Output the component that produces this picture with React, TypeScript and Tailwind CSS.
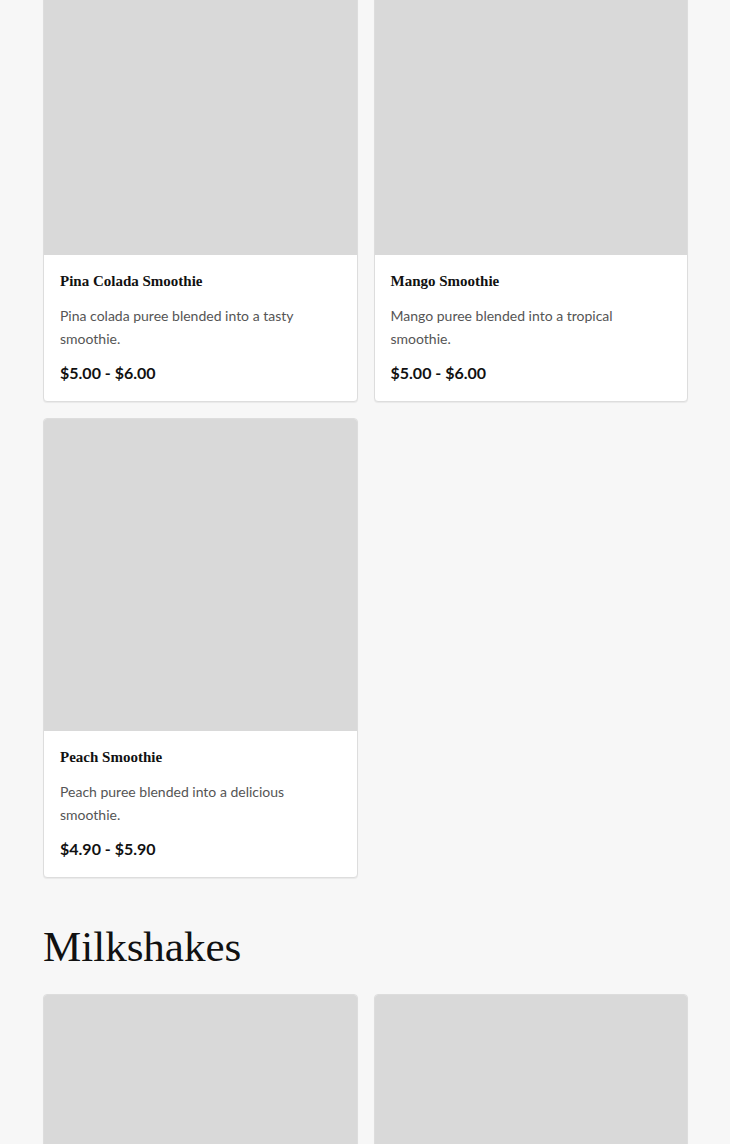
const smoothies = [
  { name: "Pina Colada Smoothie", desc: "Pina colada puree blended into a tasty smoothie.", price: "$5.00 - $6.00" },
  { name: "Mango Smoothie", desc: "Mango puree blended into a tropical smoothie.", price: "$5.00 - $6.00" },
  { name: "Peach Smoothie", desc: "Peach puree blended into a delicious smoothie.", price: "$4.90 - $5.90" },
];

type Item = { name: string; desc: string; price: string };

function ProductCard({ item }: { item?: Item }) {
  return (
    <div className="overflow-hidden rounded-[4px] border border-[#dddddd] bg-white shadow-[0_1px_1px_rgba(0,0,0,0.06)]">
      <div className="aspect-square w-full bg-[#d9d9d9]" />
      {item && (
        <div className="px-4 pt-4 pb-[18px]">
          <h3 className="text-[15px] leading-5 font-bold text-[#111]" style={{ fontFamily: '"Liberation Serif", serif' }}>
            {item.name}
          </h3>
          <p className="mt-[13px] text-[14px] leading-[23px] text-[#555]">{item.desc}</p>
          <p className="mt-[13px] text-[16px] leading-5 font-bold text-[#111]">{item.price}</p>
        </div>
      )}
    </div>
  );
}

export default function App() {
  return (
    <div className="min-h-screen bg-[#f7f7f7] pl-[43px] pr-[42px]" style={{ fontFamily: "Lato, sans-serif" }}>
      <div className="-mt-[59px] grid grid-cols-2 gap-4">
        {smoothies.map((s) => (
          <ProductCard key={s.name} item={s} />
        ))}
      </div>

      <h2
        className="mt-[42px] mb-[21px] text-[43px] leading-[53px] text-[#111]"
        style={{ fontFamily: '"Liberation Serif", serif' }}
      >
        Milkshakes
      </h2>

      <div className="grid grid-cols-2 gap-4">
        <ProductCard />
        <ProductCard />
      </div>
    </div>
  );
}
